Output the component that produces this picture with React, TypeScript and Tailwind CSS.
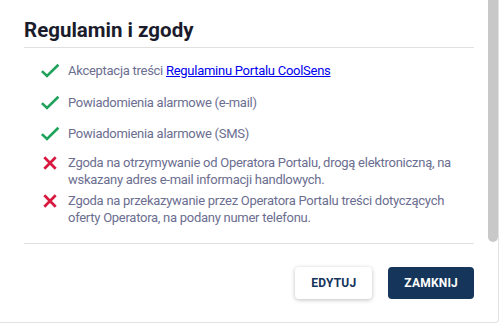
import React from 'react';

interface Consent {
    ok: boolean;
    text: React.ReactNode;
    spacing: string;
}

const consents: Consent[] = [
    {
        ok: true,
        spacing: 'mt-0',
        text: (
            <>
                Akceptacja treści{' '}
                <a href="#" className="text-[#0000ee] underline">
                    Regulaminu Portalu CoolSens
                </a>
            </>
        ),
    },
    { ok: true, spacing: 'mt-[15px]', text: 'Powiadomienia alarmowe (e-mail)' },
    { ok: true, spacing: 'mt-[15px]', text: 'Powiadomienia alarmowe (SMS)' },
    {
        ok: false,
        spacing: 'mt-[12.5px]',
        text: 'Zgoda na otrzymywanie od Operatora Portalu, drogą elektroniczną, na wskazany adres e-mail informacji handlowych.',
    },
    {
        ok: false,
        spacing: 'mt-[5px]',
        text: 'Zgoda na przekazywanie przez Operatora Portalu treści dotyczących oferty Operatora, na podany numer telefonu.',
    },
];

const CheckIcon = () => (
    <svg width="24" height="24" viewBox="0 0 24 24" className="shrink-0" fill="none">
        <polyline points="3.9,12.1 9,17 20.4,5.8" stroke="#1fa35a" strokeWidth="2.6" />
    </svg>
);

const CrossIcon = () => (
    <svg width="24" height="24" viewBox="0 0 24 24" className="shrink-0" fill="none">
        <path d="M6.3 6.3L17.7 17.7M17.7 6.3L6.3 17.7" stroke="#d8173f" strokeWidth="2.7" />
    </svg>
);

const App: React.FC = () => {
    return (
        <div className="w-[499px] h-[323px] flex bg-white border-r border-b border-[#e2e2e2] rounded-br-[4px] overflow-hidden font-['Roboto','Liberation_Sans',sans-serif]">
            {/* Dialog body */}
            <div className="flex-1 flex flex-col pl-6 pr-[13px]">
                <div className="pt-4 pb-[3px] border-b border-[#e0e0e0]">
                    <h2 className="text-[20.5px] leading-7 font-bold text-[#1b1c2b]">Regulamin i zgody</h2>
                </div>

                <ul className="flex flex-col pt-[15px] pl-[14px] text-[13px] leading-[16.5px] tracking-[-0.27px] text-[#6b6e90]">
                    {consents.map((c, i) => (
                        <li key={i} className={`flex items-start gap-[6px] ${c.spacing}`}>
                            <span className="w-6 h-[16.5px] flex items-center justify-center shrink-0">
                                {c.ok ? <CheckIcon /> : <CrossIcon />}
                            </span>
                            <span>{c.text}</span>
                        </li>
                    ))}
                </ul>

                <div className="mt-[17px] border-b border-[#e0e0e0]" />

                {/* Actions */}
                <div className="mt-[23px] flex justify-end gap-4">
                    <button className="h-8 px-4 rounded-[4px] bg-white text-[#15335a] text-[12px] font-bold tracking-[0.2px] shadow-[0_1px_4px_rgba(0,0,0,0.25)]">
                        EDYTUJ
                    </button>
                    <button className="h-8 px-4 rounded-[4px] bg-[#15355a] text-white text-[12px] font-bold tracking-[0.2px]">
                        ZAMKNIJ
                    </button>
                </div>
            </div>

            {/* Scrollbar */}
            <div className="w-[11px] shrink-0">
                <div className="ml-px w-[10px] h-[242px] bg-[#c8c8c8] rounded-b-[5px]" />
            </div>
        </div>
    );
};

export default App;
